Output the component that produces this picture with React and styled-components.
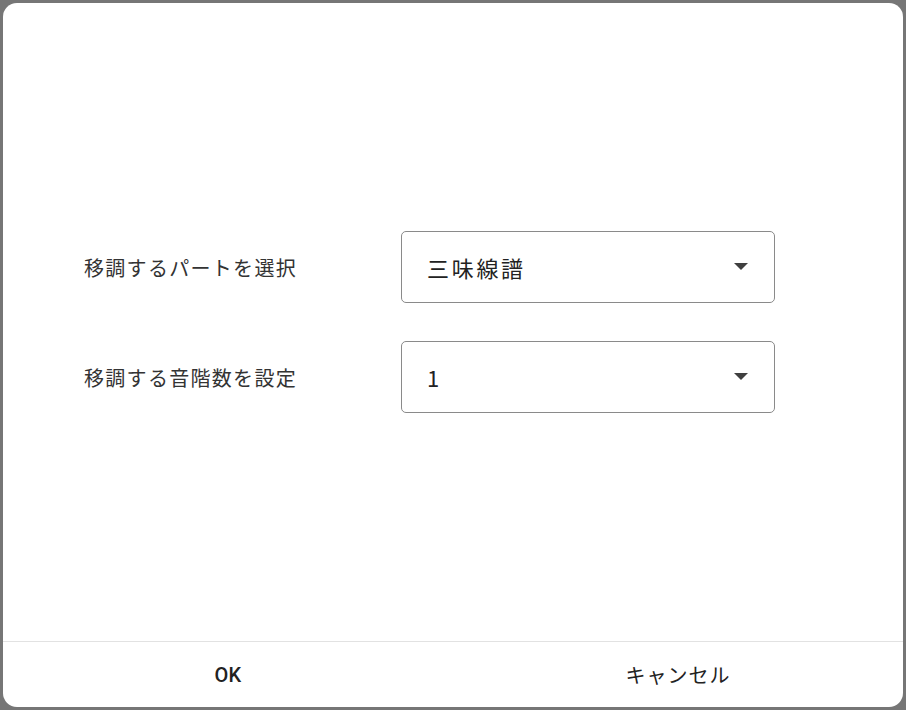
import React from "react";
import styled, { createGlobalStyle } from "styled-components";

const Global = createGlobalStyle`
  html, body { margin: 0; padding: 0; background: #767676; }
  body { font-family: "Noto Sans CJK JP", "Noto Sans", sans-serif; }
`;

const Backdrop = styled.div`
  box-sizing: border-box;
  width: 906px;
  height: 710px;
  padding: 3px;
  background: #767676;
  display: flex;
`;

const Dialog = styled.div`
  flex: 1;
  background: #fff;
  border-radius: 14px;
  display: flex;
  flex-direction: column;
  overflow: hidden;
`;

const Content = styled.div`
  flex: 1;
  display: flex;
  flex-direction: column;
  justify-content: center;
  gap: 38px;
  padding-left: 81px;
`;

const Row = styled.div`
  display: grid;
  grid-template-columns: 317px 374px;
  align-items: center;
`;

const Label = styled.div`
  font-size: 20px;
  color: #333;
  letter-spacing: 1.3px;
`;

const Select = styled.div`
  box-sizing: border-box;
  height: 72px;
  border: 1px solid #8a8a8a;
  border-radius: 5px;
  display: flex;
  align-items: center;
  justify-content: space-between;
  padding: 0 26px 0 25px;
  font-size: 22px;
  color: #222;
  letter-spacing: 2.7px;
`;

const Arrow = styled.svg`
  width: 14px;
  height: 8px;
  fill: #3f3f3f;
`;

const Footer = styled.div`
  height: 65px;
  border-top: 1px solid #e2e2e2;
  display: grid;
  grid-template-columns: 1fr 1fr;
`;

const Button = styled.button`
  border: none;
  background: transparent;
  font-family: ${(p) => (p.$latin ? '"Roboto", sans-serif' : '"Noto Sans CJK JP", sans-serif')};
  font-size: 20px;
  font-weight: ${(p) => (p.$latin ? 500 : 400)};
  letter-spacing: ${(p) => (p.$latin ? "0.3px" : "1px")};
  color: #222;
  padding: 0;
  cursor: pointer;
`;

const SelectBox = ({ value }) => (
  <Select>
    <span>{value}</span>
    <Arrow viewBox="0 0 14 8"><path d="M0 0h14L7 7z" /></Arrow>
  </Select>
);

export default function App() {
  return (
    <>
      <Global />
      <Backdrop>
        <Dialog>
          <Content>
            <Row>
              <Label>移調するパートを選択</Label>
              <SelectBox value="三味線譜" />
            </Row>
            <Row>
              <Label>移調する音階数を設定</Label>
              <SelectBox value="1" />
            </Row>
          </Content>
          <Footer>
            <Button $latin>OK</Button>
            <Button>キャンセル</Button>
          </Footer>
        </Dialog>
      </Backdrop>
    </>
  );
}
